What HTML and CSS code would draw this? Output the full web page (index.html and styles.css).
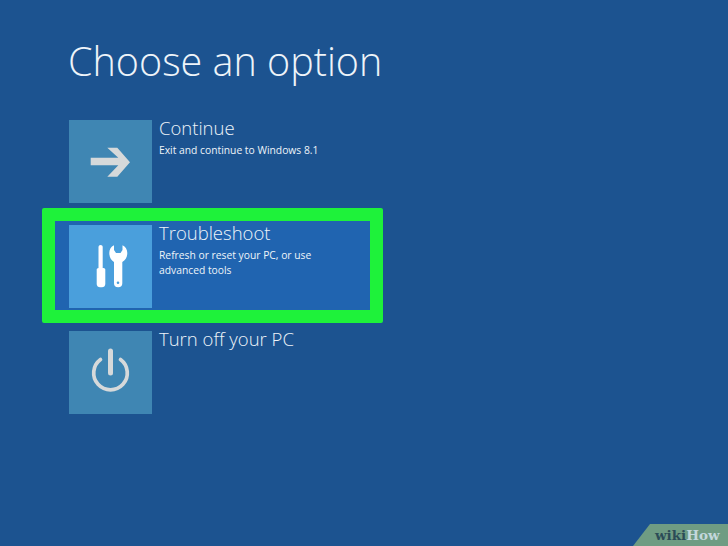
FILE: index.html
```html
<!DOCTYPE html>
<html lang="en">
<head>
    <meta charset="UTF-8">
    <meta name="viewport" content="width=device-width, initial-scale=1.0">
    <title>Choose an option</title>
    <link rel="stylesheet" href="styles.css">
</head>
<body>
    <h1>Choose an option</h1>

    <div class="options">
        <div class="option">
            <div class="tile">
                <svg class="icon arrow" viewBox="0 0 41 30">
                    <path d="M0.700 10.700H28.300L17.300 0.700H27.300L40 15.200 27.300 29.700H17.300L28.300 18.300H0.700z"/>
                </svg>
            </div>
            <div class="option-text">
                <h2>Continue</h2>
                <p>Exit and continue to Windows 8.1</p>
            </div>
        </div>

        <div class="highlight">
            <div class="option selected">
                <div class="tile">
                    <svg class="icon tools" viewBox="0 0 35 45">
                        <path d="M7.600 1C8.800 1 9.700 1.900 9.700 3V24H5.500V3C5.500 1.900 6.400 1 7.600 1z"/>
                        <path d="M5.500 24H10.500C11.500 24 12.300 24.800 12.300 25.800V40C12.300 42 10.800 43.300 9 43.300H7C5.200 43.300 3.700 42 3.700 40V25.800C3.700 24.800 4.500 24 5.500 24z"/>
                        <path fill-rule="evenodd" d="M21 1.200C18 2.500 16.300 5.500 16.300 9 16.300 13 18 16 21 18V39.300A4.150 4 0 0 0 29.300 39.300V18C32.500 16 34.300 13 34.300 9 34.300 5.500 32.500 2.500 29.500 1.200V6L27.500 9H23L21 6zM25 37.400A1.300 1.300 0 1 0 25 40 1.300 1.300 0 0 0 25 37.400z"/>
                    </svg>
                </div>
                <div class="option-text">
                    <h2>Troubleshoot</h2>
                    <p>Refresh or reset your PC, or use<br>advanced tools</p>
                </div>
            </div>
        </div>

        <div class="option">
            <div class="tile">
                <svg class="icon power" viewBox="0 0 41 51">
                    <path d="M10.500 12.500A16.800 16.800 0 1 0 30.500 12.500"/>
                    <path class="power-bar" d="M20.500 4V26"/>
                </svg>
            </div>
            <div class="option-text">
                <h2>Turn off your PC</h2>
            </div>
        </div>
    </div>

    <div class="watermark"><span class="wiki">wiki</span><span class="how">How</span></div>
</body>
</html>
```

FILE: styles.css
```css
:root {
    --bg-color: #1c5390;
    --tile-color: #3f86b3;
    --tile-active: #4a9fdc;
    --row-active: #2064b0;
    --green: #1ef23a;
    --icon-color: #d6d9da;
}

html, body {
    height: 100%;
}

body {
    margin: 0;
    padding: 36px 0 0 68px;
    box-sizing: border-box;
    position: relative;
    overflow: hidden;
    background-color: var(--bg-color);
    color: #eef4f9;
    font-family: 'Open Sans', 'Liberation Sans', sans-serif;
}

h1 {
    margin: 0;
    font-size: 39.500px;
    line-height: 50px;
    font-weight: 300;
}

.options {
    display: flex;
    flex-direction: column;
    margin-top: 34px;
    margin-left: 1px;
}

.option {
    display: flex;
    gap: 7px;
}

.tile {
    width: 83px;
    height: 83px;
    flex: none;
    display: flex;
    align-items: center;
    justify-content: center;
    background-color: var(--tile-color);
}

.icon {
    fill: var(--icon-color);
}

.arrow {
    width: 41px;
    height: 30px;
}

.tools {
    width: 35px;
    height: 45px;
    fill: #fff;
}

.power {
    width: 41px;
    height: 51px;
    fill: none;
    stroke: var(--icon-color);
    stroke-width: 3.700px;
    stroke-linecap: round;
}

.power .power-bar {
    stroke-width: 5px;
}

.option-text h2 {
    margin: -3px 0 0;
    font-size: 18.500px;
    line-height: 22px;
    font-weight: 300;
}

.option-text p {
    margin: 4px 0 0;
    font-size: 10.300px;
    line-height: 15px;
}

.highlight {
    width: 341px;
    margin: 5px 0 8px -27px;
    padding: 4px 0 2px 14px;
    box-sizing: border-box;
    border: 13px solid var(--green);
    border-radius: 2px;
    background-color: var(--row-active);
}

.selected .tile {
    background-color: var(--tile-active);
}

.watermark {
    position: absolute;
    right: 0;
    bottom: 0;
    width: 95px;
    height: 22px;
    padding-left: 22px;
    box-sizing: border-box;
    clip-path: polygon(17px 0, 100% 0, 100% 100%, 0 100%);
    background-color: #6f9c83;
    font-family: 'DejaVu Serif', 'Liberation Serif', serif;
    font-size: 13.500px;
    line-height: 22px;
    font-weight: bold;
}

.wiki {
    color: #2c4c57;
}

.how {
    color: #c3d8dc;
}
```
